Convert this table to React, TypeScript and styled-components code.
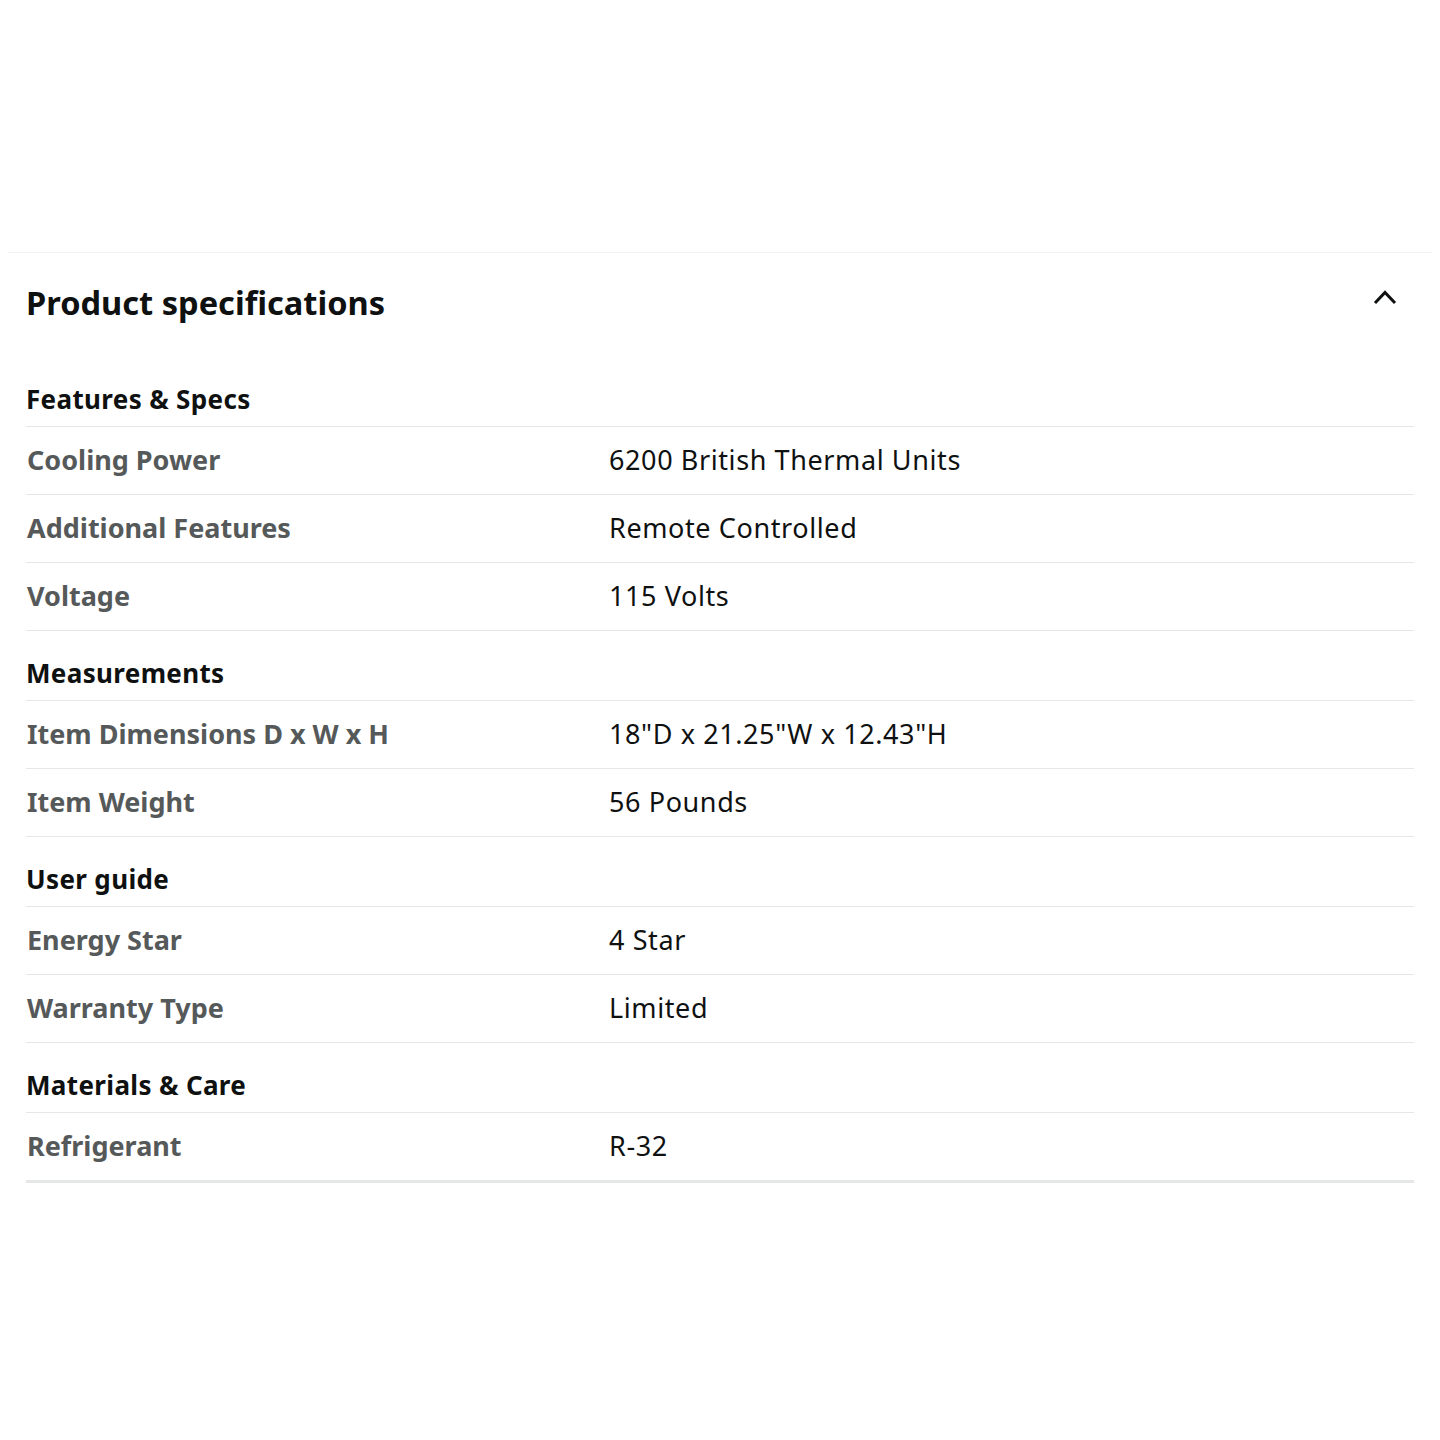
import React from "react";
import styled, { createGlobalStyle } from "styled-components";

const GlobalStyle = createGlobalStyle`
  html, body {
    margin: 0;
    padding: 0;
    background: #ffffff;
  }
  body {
    font-family: "Noto Sans", "Open Sans", Arial, sans-serif;
    color: #0f1111;
  }
`;

const Page = styled.div`
  width: 1440px;
  min-height: 1440px;
  padding-top: 252px;
  box-sizing: border-box;
`;

const Section = styled.section`
  margin: 0 8px;
  border-top: 1px solid #f3f3f3;
  padding: 0 18px;
`;

const Header = styled.div`
  display: flex;
  align-items: center;
  justify-content: space-between;
  padding: 28px 0 32px;
`;

const Title = styled.h2`
  margin: 0;
  font-size: 32.6px;
  line-height: 44px;
  font-weight: 700;
  color: #0f1111;
`;

const Toggle = styled.button`
  border: 0;
  background: transparent;
  padding: 0;
  margin: 0 17px 12px 0;
  width: 24px;
  height: 16px;
  display: flex;
  cursor: pointer;
`;

const GroupHeading = styled.div`
  font-size: 26px;
  line-height: 34px;
  font-weight: 700;
  letter-spacing: 0.35px;
  color: #0f1111;
  padding: 25px 0 10px;
  border-bottom: 1px solid #e7e7e7;
`;

const Row = styled.div<{ $last?: boolean }>`
  display: grid;
  grid-template-columns: 583px 1fr;
  align-items: center;
  padding: 16px 0 17px;
  border-bottom: ${(p) => (p.$last ? "3px solid #e6e7e7" : "1px solid #e7e7e7")};
`;

const Label = styled.div`
  font-size: 27px;
  line-height: 34px;
  font-weight: 700;
  color: #565959;
  padding-left: 1px;
`;

const Value = styled.div`
  font-size: 27px;
  line-height: 34px;
  font-weight: 400;
  letter-spacing: 0.6px;
  color: #0f1111;
`;

type Group = { title: string; rows: [string, string][] };

const groups: Group[] = [
  {
    title: "Features & Specs",
    rows: [
      ["Cooling Power", "6200 British Thermal Units"],
      ["Additional Features", "Remote Controlled"],
      ["Voltage", "115 Volts"],
    ],
  },
  {
    title: "Measurements",
    rows: [
      ["Item Dimensions D x W x H", '18"D x 21.25"W x 12.43"H'],
      ["Item Weight", "56 Pounds"],
    ],
  },
  {
    title: "User guide",
    rows: [
      ["Energy Star", "4 Star"],
      ["Warranty Type", "Limited"],
    ],
  },
  {
    title: "Materials & Care",
    rows: [["Refrigerant", "R-32"]],
  },
];

export default function App() {
  return (
    <Page>
      <GlobalStyle />
      <Section>
        <Header>
          <Title>Product specifications</Title>
          <Toggle aria-label="Collapse">
            <svg width="24" height="16" viewBox="0 0 24 16">
              <polyline
                points="2,14 12,3.5 22,14"
                fill="none"
                stroke="#0f1111"
                strokeWidth="3"
              />
            </svg>
          </Toggle>
        </Header>
        {groups.map((g, gi) => (
          <div key={g.title}>
            <GroupHeading>{g.title}</GroupHeading>
            {g.rows.map(([l, v], ri) => (
              <Row key={l} $last={gi === groups.length - 1 && ri === g.rows.length - 1}>
                <Label>{l}</Label>
                <Value>{v}</Value>
              </Row>
            ))}
          </div>
        ))}
      </Section>
    </Page>
  );
}
